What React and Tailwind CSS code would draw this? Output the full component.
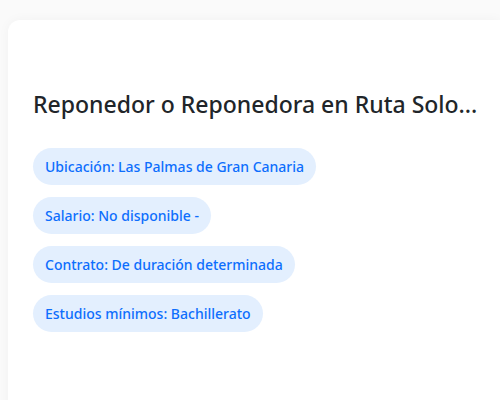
const TAGS = [
  'Ubicación: Las Palmas de Gran Canaria',
  'Salario: No disponible -',
  'Contrato: De duración determinada',
  'Estudios mínimos: Bachillerato',
]

export default function App() {
  return (
    <div className="min-h-[400px] bg-[#fafafa] pl-2 pt-5" style={{ fontFamily: '"Noto Sans", "Open Sans", sans-serif' }}>
      <div className="h-[400px] rounded-tl-xl bg-white pl-[25px] pt-[68px] shadow-[0_0_12px_rgba(0,0,0,0.04)]">
        <h1 className="w-[450px] truncate text-[23px] font-medium leading-[32px] text-[#212529]">
          Reponedor o Reponedora en Ruta Solo...
        </h1>
        <div className="mt-[28px] flex flex-col items-start gap-3">
          {TAGS.map(t => (
            <span key={t} className="rounded-full bg-[#e3effe] px-3 py-[8px] text-sm font-medium leading-[21px] text-[#0d6efd]">
              {t}
            </span>
          ))}
        </div>
      </div>
    </div>
  )
}
